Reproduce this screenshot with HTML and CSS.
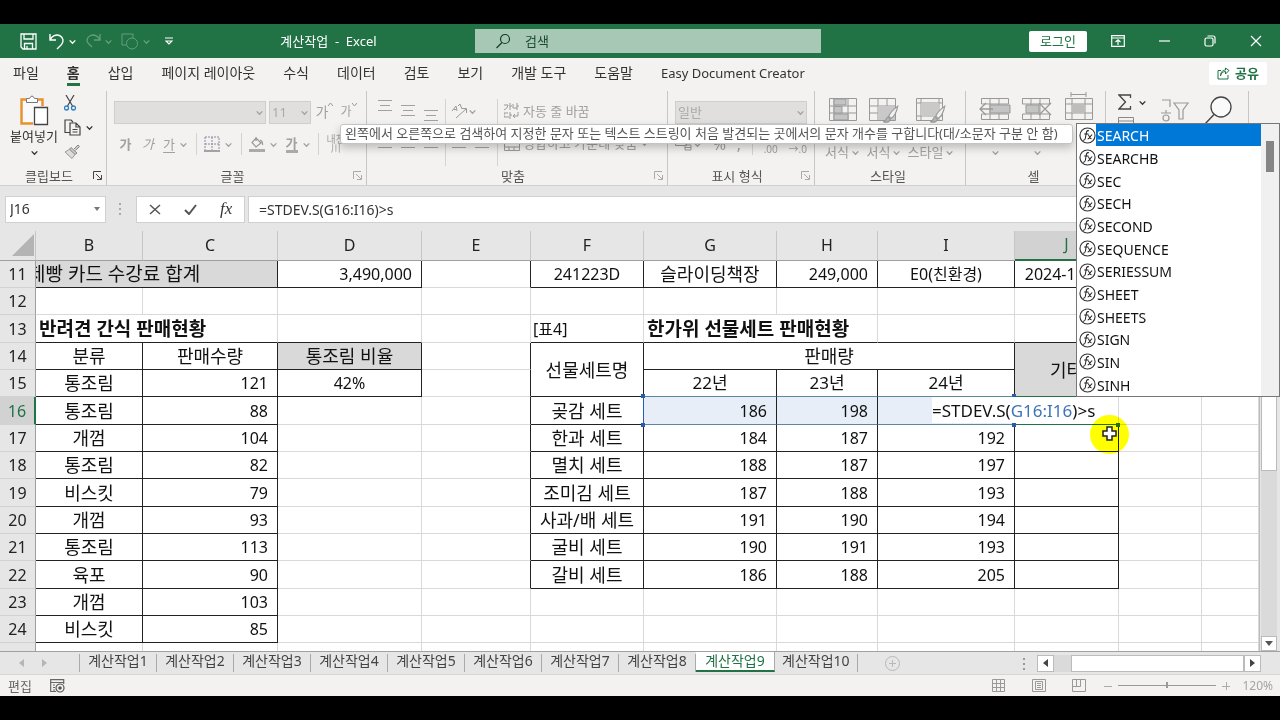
FILE: index.html
```html
<!DOCTYPE html>
<html lang="ko">
<head>
    <meta charset="UTF-8">
    <meta name="viewport" content="width=device-width, initial-scale=1.0">
    <title>계산작업 - Excel</title>
    <link rel="stylesheet" href="styles.css">
</head>
<body>
    <!-- 공용 아이콘 -->
    <svg class="defs" aria-hidden="true">
        <symbol id="chev" viewBox="0 0 8 8"><path d="M1.5 3 4 5.5 6.500 3" fill="none" stroke="currentColor" stroke-width="1.2"/></symbol>
        <symbol id="launch" viewBox="0 0 9 9"><path d="M.5 8V.5H8M3 3l5 5M8.500 4v4.500H4" fill="none" stroke="currentColor"/></symbol>
        <symbol id="fx" viewBox="0 0 18 18"><circle cx="9" cy="9" r="8" fill="none" stroke="#333" stroke-width="1.2"/><path d="M10.500 4c-2.300-.8-2.700 1-3.200 4.500S6.500 14.500 4 14M5.500 7.500h4.500M9.500 8.500c1.500-.6 1.500 4.500 3.800 4M14 8.200c-1.600 0-2.800 4.500-4.800 4.500" fill="none" stroke="#222" stroke-width="1.1"/></symbol>
        <symbol id="brush" viewBox="0 0 14 16"><path d="M13 1C9 4 6 7.500 5 10l2 2c2.500-1.500 5-6 6-11z" fill="#f3f2f1" stroke="#999"/><path d="M4.500 10.500C2.500 11 3 14 .5 15c3 .8 5.500 0 6-2.500z" fill="#b5b5b5" stroke="#999"/></symbol>
        <symbol id="wide" viewBox="0 0 16 14"><path d="M1 1.500h14M3 6.500h10M1 11.500h14" stroke="currentColor" fill="none"/></symbol>
    </svg>

    <div class="window">
        <header class="titlebar">
            <div class="quick">
                <button aria-label="저장"><svg width="17" height="17" viewBox="0 0 17 17"><path d="M1 1h15v15H3l-2-2zM4 1v5h9V1M4.500 16v-5.500h8V16M7 13v3" fill="none" stroke="#fff" stroke-width="1.3"/></svg></button>
                <button class="undo" aria-label="실행 취소"><svg width="16" height="17" viewBox="0 0 16 17"><path d="M1 1v6h6M1 7c2-4 6-6 9.500-4.500 4 2 4.500 6 2 9L8 16" fill="none" stroke="#fff" stroke-width="1.4"/></svg><svg class="chev"><use href="#chev"/></svg></button>
                <button class="faded" aria-label="다시 실행"><svg width="16" height="17" viewBox="0 0 16 17"><path d="M15 1v6H9M15 7c-2-4-6-6-9.500-4.500-4 2-4.500 6-2 8L7 14" fill="none" stroke="#fff" stroke-width="1.3"/></svg><svg class="chev"><use href="#chev"/></svg></button>
                <button class="faded" aria-label="도형"><svg width="18" height="17" viewBox="0 0 18 17"><path d="M5 12H1V1h11v4" fill="none" stroke="#fff"/><circle cx="11" cy="10.500" r="5.500" fill="none" stroke="#fff"/></svg><svg class="chev"><use href="#chev"/></svg></button>
                <button class="more" aria-label="빠른 실행 도구 모음"><svg width="8" height="8" viewBox="0 0 8 8"><path d="M0 1h8M1 4l3 3 3-3z" fill="none" stroke="#fff" stroke-width="1.2"/></svg></button>
            </div>
            <div class="doc-name">계산작업&nbsp; -&nbsp; Excel</div>
            <label class="search">
                <svg width="16" height="16" viewBox="0 0 16 16"><circle cx="10" cy="6" r="4.500" fill="none" stroke="#123f26" stroke-width="1.2"/><path d="M7 9.500 1.500 15" stroke="#123f26" stroke-width="1.3"/></svg>
                <input type="text" placeholder="검색" aria-label="검색">
            </label>
            <button class="login">로그인</button>
            <div class="controls">
                <button aria-label="리본 표시 옵션"><svg width="14" height="12" viewBox="0 0 14 12"><path d="M.7.7h12.600v10.600H.7zM.7 3h12.600M7 10V5M4.500 7 7 4.700 9.500 7" fill="none" stroke="#fff" stroke-width="1.2"/></svg></button>
                <button aria-label="최소화"><svg width="11" height="12"><path d="M0 6h11" stroke="#fff" stroke-width="1.2"/></svg></button>
                <button aria-label="이전 크기로"><svg width="12" height="12" viewBox="0 0 12 12"><rect x="1" y="3" width="8" height="8" rx="1.500" fill="none" stroke="#fff" stroke-width="1.2"/><path d="M3.500 1H9q2 0 2 2v5.500" fill="none" stroke="#fff" stroke-width="1.2"/></svg></button>
                <button aria-label="닫기"><svg width="12" height="12"><path d="m1 1 10 10M11 1 1 11" stroke="#fff" stroke-width="1.2"/></svg></button>
            </div>
        </header>

        <nav class="menu">
            <a href="#">파일</a>
            <a href="#" class="on">홈</a>
            <a href="#">삽입</a>
            <a href="#">페이지 레이아웃</a>
            <a href="#">수식</a>
            <a href="#">데이터</a>
            <a href="#">검토</a>
            <a href="#">보기</a>
            <a href="#">개발 도구</a>
            <a href="#">도움말</a>
            <a href="#" class="latin">Easy Document Creator</a>
            <button class="share"><svg width="13" height="13" viewBox="0 0 13 13"><path d="M4 3.500H1V12h10V8M3.500 9C4 6 6 4.500 8.500 4.500V7L12 3.500 8.500 1v2C5 3 3.500 6 3.500 9z" fill="none" stroke="#217346"/></svg>공유</button>
        </nav>

        <!-- 리본 -->
        <section class="ribbon">
            <div class="group g-clip">
                <div class="body">
                    <button class="paste">
                        <svg width="30" height="31" viewBox="0 0 30 31"><path d="M7 4.500H2.500v24H14M19 4.500h4.500V11" fill="none" stroke="#e8912d" stroke-width="2.400"/><path d="M4 6h18v5h-7v16H4z" fill="#fafafa"/><path d="M7.500 7.500v-4h3q2.500-5 5 0h3v4z" fill="#fff" stroke="#777"/><path d="M15.500 12.500h13v17h-13z" fill="#fff" stroke="#444" stroke-width="1.3"/></svg>
                        붙여넣기
                        <svg class="chev"><use href="#chev"/></svg>
                    </button>
                    <div class="stack">
                        <button aria-label="잘라내기"><svg width="12" height="16" viewBox="0 0 12 16"><path d="m2 0 6.500 11M10 0 3.500 11" stroke="#444" stroke-width="1.2"/><circle cx="2.500" cy="13" r="2" fill="none" stroke="#2b7cc1" stroke-width="1.3"/><circle cx="9.500" cy="13" r="2" fill="none" stroke="#2b7cc1" stroke-width="1.3"/></svg></button>
                        <button aria-label="복사"><svg width="17" height="17" viewBox="0 0 17 17"><path d="M6 13.500H1V1h6l2 2M6 4h6l4 4v8H6zM12 4v4h4M8.500 10.500h5M8.500 13h5" fill="none" stroke="#444" stroke-width="1.2"/></svg><svg class="chev"><use href="#chev"/></svg></button>
                        <button aria-label="서식 복사"><svg width="16" height="15" viewBox="0 0 16 15"><path d="m10 5 4-4 1.500 1.500-4 4M7 3.500l6 5.500-2 1.500L5.500 5.200z" fill="#ccc" stroke="#888"/><path d="M5.500 5.500 1 8l7 6.500 3-4z" fill="#ddd" stroke="#999"/></svg></button>
                    </div>
                </div>
                <div class="caption"><span>클립보드</span><svg class="launch dark"><use href="#launch"/></svg></div>
            </div>

            <div class="group g-font off">
                <div class="body rows">
                    <div class="row">
                        <span class="pick font-pick"><select aria-label="글꼴"><option></option></select><svg class="chev"><use href="#chev"/></svg></span>
                        <span class="pick size-pick"><select aria-label="글꼴 크기"><option>11</option></select><svg class="chev"><use href="#chev"/></svg></span>
                        <button class="grow">가<svg width="5" height="12"><path d="m0 4 2.500-3L5 4" fill="none" stroke="#999"/></svg></button>
                        <button class="grow small">가<svg width="5" height="12"><path d="m0 1 2.500 3L5 1" fill="none" stroke="#999"/></svg></button>
                    </div>
                    <div class="row tight">
                        <button><b>가</b></button>
                        <button><i>가</i></button>
                        <button><u>가</u><svg class="chev"><use href="#chev"/></svg></button>
                        <span class="sep"></span>
                        <button aria-label="테두리"><svg width="16" height="16" viewBox="0 0 16 16"><path d="M1 1h14v13M1 1v13M8 1v13M1 8h14" fill="none" stroke="#8a8aa0" stroke-dasharray="2 1"/><path d="M0 15h16" stroke="#888" stroke-width="1.500"/></svg><svg class="chev"><use href="#chev"/></svg></button>
                        <span class="sep"></span>
                        <button aria-label="채우기 색"><svg width="16" height="17" viewBox="0 0 16 17"><path d="m7 2 5 5-5 4-4-4.500zM7 5V1M11 4q3 1 2.500 5" fill="none" stroke="#999" stroke-width="1.2"/><path d="M0 14.500h16" stroke="#aaa" stroke-width="3"/></svg><svg class="chev"><use href="#chev"/></svg></button>
                        <button><b class="tint">가</b><svg class="chev"><use href="#chev"/></svg></button>
                        <span class="sep"></span>
                        <button class="ruby">내천<br>川</button>
                    </div>
                </div>
                <div class="caption"><span>글꼴</span><svg class="launch"><use href="#launch"/></svg></div>
            </div>

            <div class="group g-align off">
                <div class="body cols">
                    <div class="trio">
                        <svg class="up"><use href="#wide"/></svg><svg><use href="#wide"/></svg><svg class="down"><use href="#wide"/></svg>
                        <svg><use href="#wide"/></svg><svg><use href="#wide"/></svg><svg><use href="#wide"/></svg>
                    </div>
                    <div class="turn">
                        <button aria-label="방향"><svg width="17" height="16" viewBox="0 0 17 16"><path d="m1 8 4-5 1 5M3 6.500h2M7 3l2-2 2 5M5 15 15 6M11 5.500h4.500V10" fill="none" stroke="#999"/></svg><svg class="chev"><use href="#chev"/></svg></button>
                        <div><svg><use href="#wide"/></svg><svg><use href="#wide"/></svg></div>
                    </div>
                    <div class="wrap">
                        <button><svg width="16" height="16" viewBox="0 0 16 16"><path d="M0 2h4q0 3-4 5M6 0v7M6 3h2M9 1v4h4M13 0v7M13 3h2M4 10H0v4h5M6 9v7M6 12h2M14 9v4H9M11 11l-2 2 2 2" fill="none" stroke="#999"/></svg>자동 줄 바꿈</button>
                        <button><svg width="16" height="15" viewBox="0 0 16 15"><path d="M.5.5h15v14H.5zM.5 4h15M.5 11h15M5 .5V4M10 .5V4M5 11v3.500M10 11v3.500" fill="none" stroke="#999"/></svg>병합하고 가운데 맞춤<svg class="chev"><use href="#chev"/></svg></button>
                    </div>
                </div>
                <div class="caption"><span>맞춤</span><svg class="launch"><use href="#launch"/></svg></div>
            </div>

            <div class="group g-num off">
                <div class="body rows">
                    <div class="row"><span class="pick"><select aria-label="표시 형식"><option>일반</option></select><svg class="chev"><use href="#chev"/></svg></span></div>
                    <div class="row spread">
                        <button aria-label="회계 표시 형식"><svg width="18" height="14" viewBox="0 0 18 14"><path d="M.5 2.500h11v6H.5zM10 8h6v5h-6zM10 10.500h6" fill="none" stroke="#999"/></svg><svg class="chev"><use href="#chev"/></svg></button>
                        <button class="pct">%</button>
                        <button class="pct">,</button>
                        <span class="sep"></span>
                        <button class="dec">.0<br>.00</button>
                        <button class="dec">.00<br>→.0</button>
                    </div>
                </div>
                <div class="caption"><span>표시 형식</span><svg class="launch"><use href="#launch"/></svg></div>
            </div>

            <div class="group g-style off">
                <div class="body tiles">
                    <button aria-label="조건부 서식"><svg width="30" height="26" viewBox="0 0 30 26"><path d="M1.500 1.500h27v22h-27zM1.500 9h27M1.500 16h27M6 1.500v22M20 1.500v22" fill="none" stroke="#999"/><path d="M6 2h12v6H6zM6 9.500h8V16H6zM6 17h14v6H6z" fill="#c4c4c4" stroke="#999"/></svg><span>서식<svg class="chev"><use href="#chev"/></svg></span></button>
                    <button aria-label="표 서식"><svg width="32" height="26" viewBox="0 0 32 26"><path d="M1.500 1.500h26v22h-26zM1.500 9h26M1.500 16h26M10 1.500v22M19 1.500v22" fill="none" stroke="#999"/><path d="M10 9h17v14H10z" fill="#c9c9c9"/><use href="#brush" x="15" y="8" width="16" height="18"/></svg><span>서식<svg class="chev"><use href="#chev"/></svg></span></button>
                    <button aria-label="셀 스타일"><svg width="32" height="26" viewBox="0 0 32 26"><path d="M1.500 1.500h26v22h-26zM1.500 6h26M1.500 19h26M6 1.500v22M24 1.500v22" fill="none" stroke="#999"/><path d="M6 6h18v13H6z" fill="#c9c9c9"/><use href="#brush" x="15" y="8" width="16" height="18"/></svg><span>스타일<svg class="chev"><use href="#chev"/></svg></span></button>
                </div>
                <div class="caption"><span>스타일</span></div>
            </div>

            <div class="group g-cell off">
                <div class="body tiles">
                    <button aria-label="삽입"><svg width="32" height="26" viewBox="0 0 32 26"><path d="M2.500 7V1.500h27V7M2.500 17v5.500h27V17M11 1.500v21M20 1.500v21M2.500 7h27M2.500 17h27" fill="none" stroke="#999"/><path d="M11 8h20v8H11z" fill="#c4c4c4" stroke="#999"/><path d="M14 12H1M7 6l-6 6 6 6" fill="none" stroke="#999" stroke-width="1.3"/></svg><span><svg class="chev"><use href="#chev"/></svg></span></button>
                    <button aria-label="삭제"><svg width="32" height="26" viewBox="0 0 32 26"><path d="M1.500 7V1.500h27V7M1.500 17v5.500h27V17M10 1.500v21M19 1.500v21M1.500 7h27M1.500 17h27" fill="none" stroke="#999"/><path d="M5 8h13v8H5z" fill="#c4c4c4" stroke="#999"/><path d="m18 6 12 12M30 6 18 18" stroke="#999" stroke-width="1.300"/></svg><span><svg class="chev"><use href="#chev"/></svg></span></button>
                    <button aria-label="서식"><svg class="spill" width="30" height="26" viewBox="0 0 30 26"><path d="M7-2.500h15M7-5v5M22-5v5M1.500 1.500h27v21h-27zM1.500 7h27M1.500 16h27M8 1.500v21M21 1.500v21" fill="none" stroke="#999"/><path d="M8 7h13v9H8z" fill="#bdbdbd"/></svg><span></span></button>
                </div>
                <div class="caption"><span>셀</span></div>
            </div>

            <div class="group g-edit">
                <div class="body edit">
                    <div class="sum">
                        <button aria-label="합계"><svg width="14" height="16" viewBox="0 0 14 16"><path d="M12.500 4V1H1l6.500 7L1 15h11.500v-3" fill="none" stroke="#444" stroke-width="1.300"/></svg><svg class="chev"><use href="#chev"/></svg></button>
                        <button aria-label="채우기"><svg width="16" height="16" viewBox="0 0 16 16"><path d="M.5.5h15v14H.5zM.5 4h15M8 6v6M5 9l3 3 3-3" fill="none" stroke="#888"/></svg></button>
                    </div>
                    <button aria-label="정렬 및 필터"><svg width="30" height="26" viewBox="0 0 30 26"><path d="M2 2h8v7M1 15h10M6 12v3M14 5h14l-5 7v9h-4v-9z" fill="none" stroke="#999" stroke-width="1.200"/><circle cx="6" cy="20" r="3" fill="none" stroke="#999" stroke-width="1.200"/></svg></button>
                    <button aria-label="찾기 및 선택"><svg width="30" height="32" viewBox="0 0 30 32"><circle cx="18" cy="12" r="10" fill="#fafafa" stroke="#444" stroke-width="1.300"/><path d="M11 19.500 1 30" stroke="#444" stroke-width="1.400"/></svg></button>
                </div>
                <div class="caption"><span></span></div>
            </div>
        </section>

        <section class="formula-bar">
            <label class="name-box"><input type="text" value="J16" aria-label="이름 상자"><svg width="6" height="4"><path d="M0 0h6L3 4z" fill="#777"/></svg></label>
            <svg class="dots" width="3" height="12"><path d="M0 0h2v2H0zM0 5h2v2H0zM0 10h2v2H0z" fill="#aaa"/></svg>
            <div class="fx-buttons">
                <button aria-label="취소"><svg width="12" height="11"><path d="m1 1 10 9M11 1 1 10" stroke="#555" stroke-width="1.500"/></svg></button>
                <button aria-label="입력"><svg width="13" height="11"><path d="m1 6 4 4 7-9" fill="none" stroke="#555" stroke-width="2"/></svg></button>
                <button class="fx" aria-label="함수 삽입">fx</button>
            </div>
            <input class="formula" type="text" value="=STDEV.S(G16:I16)&gt;s" aria-label="수식 입력줄">
        </section>

        <main class="sheet">
            <div class="cells">
                <table>
                    <colgroup><col class="c-no"><col class="c-b"><col class="c-c"><col class="c-d"><col class="c-e"><col class="c-f"><col class="c-g"><col class="c-h"><col class="c-i"><col class="c-j"><col class="c-k"><col></colgroup>
                    <thead>
                        <tr><th class="corner"><svg width="22" height="22"><path d="M22 0v22H0z" fill="#b4b4b4"/></svg></th><th>B</th><th>C</th><th>D</th><th>E</th><th>F</th><th>G</th><th>H</th><th>I</th><th class="sel">J</th><th>K</th><th>L</th></tr>
                    </thead>
                    <tbody>
                        <tr><th>11</th><td class="box grey cut" colspan="2"><span>제빵 카드 수강료 합계</span></td><td class="box num">3,490,000</td><td class="r"></td><td class="box lat">241223D</td><td class="box">슬라이딩책장</td><td class="box num">249,000</td><td class="box lat">E0(친환경)</td><td class="box lat">2024-12-20</td><td></td><td></td></tr>
                        <tr><th>12</th><td></td><td></td><td></td><td></td><td></td><td></td><td></td><td></td><td></td><td></td><td></td></tr>
                        <tr><th>13</th><td class="u title" colspan="2">반려견 간식 판매현황</td><td class="u"></td><td></td><td class="u note">[표4]</td><td class="u title" colspan="2">한가위 선물세트 판매현황</td><td class="u"></td><td class="u"></td><td></td><td></td></tr>
                        <tr><th>14</th><td class="box">분류</td><td class="box">판매수량</td><td class="box grey">통조림 비율</td><td class="r"></td><td class="box" rowspan="2">선물세트명</td><td class="box" colspan="3">판매량</td><td class="box grey edge" rowspan="2">기타</td><td></td><td></td></tr>
                        <tr><th>15</th><td class="box">통조림</td><td class="box num">121</td><td class="box lat">42%</td><td class="r"></td><td class="box ref-top mix">22년</td><td class="box ref-top mix">23년</td><td class="box ref-top mix">24년</td><td></td><td></td></tr>
                        <tr><th class="sel">16</th><td class="box">통조림</td><td class="box num">88</td><td></td><td class="r"></td><td class="box ref-left">곶감 세트</td><td class="box num ref">186</td><td class="box num ref">198</td><td class="box num ref"></td><td class="edge host"><i class="knob k1"></i><i class="knob k2"></i><i class="knob k3"></i><i class="knob k4"></i><i class="knob k5"></i><div class="editor">=STDEV.S(<span>G16:I16</span>)&gt;s</div></td><td></td><td></td></tr>
                        <tr><th>17</th><td class="box">개껌</td><td class="box num">104</td><td></td><td class="r"></td><td class="box">한과 세트</td><td class="box num">184</td><td class="box num">187</td><td class="box num">192</td><td class="box"></td><td></td><td></td></tr>
                        <tr><th>18</th><td class="box">통조림</td><td class="box num">82</td><td></td><td class="r"></td><td class="box">멸치 세트</td><td class="box num">188</td><td class="box num">187</td><td class="box num">197</td><td class="box"></td><td></td><td></td></tr>
                        <tr><th>19</th><td class="box">비스킷</td><td class="box num">79</td><td></td><td class="r"></td><td class="box">조미김 세트</td><td class="box num">187</td><td class="box num">188</td><td class="box num">193</td><td class="box"></td><td></td><td></td></tr>
                        <tr><th>20</th><td class="box">개껌</td><td class="box num">93</td><td></td><td class="r"></td><td class="box">사과/배 세트</td><td class="box num">191</td><td class="box num">190</td><td class="box num">194</td><td class="box"></td><td></td><td></td></tr>
                        <tr><th>21</th><td class="box">통조림</td><td class="box num">113</td><td></td><td class="r"></td><td class="box">굴비 세트</td><td class="box num">190</td><td class="box num">191</td><td class="box num">193</td><td class="box"></td><td></td><td></td></tr>
                        <tr><th>22</th><td class="box">육포</td><td class="box num">90</td><td></td><td class="r"></td><td class="box">갈비 세트</td><td class="box num">186</td><td class="box num">188</td><td class="box num">205</td><td class="box"></td><td></td><td></td></tr>
                        <tr><th>23</th><td class="box">개껌</td><td class="box num">103</td><td></td><td></td><td></td><td></td><td></td><td></td><td></td><td></td><td></td></tr>
                        <tr><th>24</th><td class="box">비스킷</td><td class="box num">85</td><td></td><td></td><td></td><td></td><td></td><td></td><td></td><td></td><td></td></tr>
                        <tr><th></th><td></td><td></td><td></td><td></td><td></td><td></td><td></td><td></td><td></td><td></td><td></td></tr>
                    </tbody>
                </table>
            </div>
            <div class="v-scroll">
                <div class="thumb"></div>
                <div class="track"></div>
                <button aria-label="아래로"><svg width="8" height="5"><path d="M0 0h8L4 5z" fill="#555"/></svg></button>
            </div>
        </main>

        <nav class="sheets">
            <div class="arrows">
                <svg width="5" height="8"><path d="M5 0v8L0 4z" fill="#b5b5b5"/></svg>
                <svg width="5" height="8"><path d="M0 0v8l5-4z" fill="#b5b5b5"/></svg>
            </div>
            <a href="#">계산작업1</a><a href="#">계산작업2</a><a href="#">계산작업3</a><a href="#">계산작업4</a><a href="#">계산작업5</a><a href="#">계산작업6</a><a href="#">계산작업7</a><a href="#">계산작업8</a><a href="#" class="on">계산작업9</a><a href="#">계산작업10</a>
            <button class="add" aria-label="새 시트"><svg width="15" height="15"><circle cx="7.500" cy="7.500" r="7" fill="none" stroke="#b8b8b8"/><path d="M4 7.500h7M7.500 4v7" stroke="#b8b8b8"/></svg></button>
            <div class="h-scroll">
                <svg class="dots" width="3" height="12"><path d="M0 0h2v2H0zM0 5h2v2H0zM0 10h2v2H0z" fill="#999"/></svg>
                <button aria-label="왼쪽으로"><svg width="5" height="8"><path d="M5 0v8L0 4z" fill="#444"/></svg></button>
                <div class="track"></div>
                <div class="thumb"></div>
                <button aria-label="오른쪽으로"><svg width="5" height="8"><path d="M0 0v8l5-4z" fill="#444"/></svg></button>
            </div>
        </nav>

        <footer class="status">
            <span>편집</span>
            <svg width="15" height="14" viewBox="0 0 15 14"><path d="M6 12.500H.7V.7h13V5M.7 3.500h13M3 6h2M3 8.500h2M3 11h2" fill="none" stroke="#666" stroke-width="1.200"/><circle cx="10" cy="9" r="4" fill="none" stroke="#555" stroke-width="1.200"/><circle cx="10" cy="9" r="1.800" fill="#555"/></svg>
            <div class="views">
                <button aria-label="기본"><svg width="14" height="14"><path d="M.5.5h12v12H.5zM.5 4.500h12M.5 8.500h12M4.500.5v12M8.500.5v12" fill="none" stroke="#999"/></svg></button>
                <button aria-label="페이지 레이아웃"><svg width="14" height="14"><path d="M.5.5h13v12H.5zM3.500 2.500h7v8h-7zM5 4.500h4M5 6.500h4M5 8.500h4" fill="none" stroke="#999"/></svg></button>
                <button aria-label="페이지 나누기 미리 보기"><svg width="14" height="14"><path d="M.5.5h13v12H.5zM4.500.5v7M.5 7.500h8M8.500.5v7" fill="none" stroke="#999"/></svg></button>
            </div>
            <div class="zoom">
                <button aria-label="축소"><svg width="8" height="8"><path d="M0 4.500h8" stroke="#aaa"/></svg></button>
                <input type="range" min="10" max="190" value="100" aria-label="확대/축소">
                <button aria-label="확대"><svg width="8" height="8"><path d="M0 4.500h8M4.500 0v8" stroke="#aaa"/></svg></button>
                <span>120%</span>
            </div>
        </footer>

        <!-- 함수 설명과 자동 완성 목록 -->
        <div class="tip" role="tooltip">왼쪽에서 오른쪽으로 검색하여 지정한 문자 또는 텍스트 스트링이 처음 발견되는 곳에서의 문자 개수를 구합니다(대/소문자 구분 안 함)</div>
        <div class="suggest">
            <ul>
                <li class="on"><svg><use href="#fx"/></svg><span>SEARCH</span></li>
                <li><svg><use href="#fx"/></svg><span>SEARCHB</span></li>
                <li><svg><use href="#fx"/></svg><span>SEC</span></li>
                <li><svg><use href="#fx"/></svg><span>SECH</span></li>
                <li><svg><use href="#fx"/></svg><span>SECOND</span></li>
                <li><svg><use href="#fx"/></svg><span>SEQUENCE</span></li>
                <li><svg><use href="#fx"/></svg><span>SERIESSUM</span></li>
                <li><svg><use href="#fx"/></svg><span>SHEET</span></li>
                <li><svg><use href="#fx"/></svg><span>SHEETS</span></li>
                <li><svg><use href="#fx"/></svg><span>SIGN</span></li>
                <li><svg><use href="#fx"/></svg><span>SIN</span></li>
                <li><svg><use href="#fx"/></svg><span>SINH</span></li>
            </ul>
            <div class="bar"><div></div></div>
        </div>

        <div class="spot"></div>
        <svg class="cursor" width="17" height="17" viewBox="0 0 17 17"><path d="M6 2h5v4h4v5h-4v4H6v-4H2V6h4z" fill="#fff" stroke="#222" stroke-width="1.500"/></svg>
    </div>
</body>
</html>
```

FILE: styles.css
```css
* {
    box-sizing: border-box;
    margin: 0;
    padding: 0;
}

body {
    height: 100vh;
    padding: 24px 0;
    background: #000;
    color: #333;
    font-family: "Noto Sans", "Noto Sans CJK KR", sans-serif;
    font-size: 14px;
    line-height: 20px;
    overflow: hidden;
}

button {
    display: flex;
    align-items: center;
    justify-content: center;
    border: 0;
    background: none;
    color: inherit;
    font: inherit;
}

input,
select {
    border: 0;
    outline: 0;
    background: none;
    color: inherit;
    font: inherit;
    min-width: 0;
}

a {
    color: inherit;
    text-decoration: none;
}

svg {
    display: block;
    flex: none;
}

.defs {
    position: absolute;
    width: 0;
    height: 0;
}

.chev {
    width: 9px;
    height: 9px;
}

.window {
    position: relative;
    display: flex;
    flex-direction: column;
    height: 100%;
    background: #e6e6e6;
    overflow: hidden;
    white-space: nowrap;
}

/* 제목 표시줄 */
.titlebar {
    display: flex;
    align-items: center;
    flex: 0 0 34px;
    background: #217346;
    color: #fff;
    font-size: 13px;
}

.quick {
    display: flex;
    align-items: center;
    gap: 8px;
    flex: 0 0 182px;
    padding-left: 20px;
}

.quick button {
    gap: 3px;
}

.quick .undo {
    padding-left: 4px;
}

.quick .more {
    padding-left: 6px;
}

.quick .faded {
    opacity: 0.3;
}

.doc-name {
    flex: 0 0 293px;
    text-align: center;
}

.search {
    display: flex;
    align-items: center;
    gap: 14px;
    flex: 0 1 346px;
    height: 24px;
    padding-left: 20px;
    background: #a6c8b5;
}

.search input {
    flex: 1;
}

.search input::placeholder {
    color: #1d4a30;
    opacity: 1;
}

.login {
    width: 58px;
    height: 21px;
    margin-left: auto;
    background: #fff;
    border-radius: 2px;
    color: #217346;
}

.controls {
    display: flex;
    padding: 0 1px 0 8px;
}

.controls button {
    width: 46px;
    height: 34px;
}

/* 메뉴 */
.menu {
    display: flex;
    align-items: center;
    gap: 28px;
    flex: 0 0 30px;
    padding: 0 13px;
    background: #f3f2f1;
}

.menu .on {
    font-weight: 700;
    border-bottom: 3px solid #217346;
    margin-top: 2px;
}

.menu .latin {
    font-size: 13px;
}

.share {
    gap: 5px;
    width: 58px;
    height: 23px;
    margin-left: auto;
    background: #fff;
    border-radius: 2px;
    color: #217346;
    font-size: 13px;
    font-weight: 700;
}

/* 리본 */
.ribbon {
    display: flex;
    flex: 0 0 98px;
    background: #f3f2f1;
    border-bottom: 1px solid #d0d0d0;
    font-size: 13px;
}

.group {
    display: flex;
    flex-direction: column;
    margin-top: 3px;
    border-right: 1px solid #c8c6c4;
}

.g-clip { width: 107px; }
.g-font { width: 260px; }
.g-align { width: 301px; }
.g-num { width: 147px; }
.g-style { width: 151px; }
.g-cell { width: 140px; }
.g-edit { width: 143px; }

.off .body {
    color: #a3a19f;
}

.body {
    display: flex;
    flex: 1;
}

.caption {
    display: flex;
    align-items: center;
    height: 19px;
    padding-right: 4px;
    color: #555;
}

.caption span {
    flex: 1;
    text-align: center;
}

.launch {
    width: 9px;
    height: 9px;
    margin-left: -5px;
    color: #aaa;
}

.launch.dark {
    color: #444;
}

.paste {
    flex-direction: column;
    justify-content: flex-start;
    width: 60px;
    padding: 4px 0 0 8px;
}

.paste .chev {
    margin-top: 2px;
}

.stack {
    display: grid;
    grid-template-rows: repeat(3, 24px);
    padding-left: 4px;
}

.stack button {
    justify-content: flex-start;
    gap: 4px;
}

.rows {
    flex-direction: column;
    gap: 8px;
    padding: 9px 7px 0;
}

.row {
    display: flex;
    align-items: center;
    gap: 3px;
    height: 24px;
}

.row.tight {
    justify-content: space-between;
    padding: 0 14px 0 4px;
}

.row.tight button {
    gap: 4px;
    min-width: 15px;
}

.row.spread {
    justify-content: space-between;
}

.row u {
    text-underline-offset: 3px;
}

.tint {
    border-bottom: 3px solid #aaa;
    line-height: 14px;
}

.sep {
    width: 1px;
    height: 22px;
    background: #d5d3d1;
}

.pick {
    display: grid;
    flex: 1;
    align-items: center;
    height: 23px;
    background: #e1dfdd;
    border: 1px solid #d0cecc;
}

.pick select,
.pick .chev {
    grid-area: 1 / 1;
}

.pick select {
    appearance: none;
    padding-left: 2px;
    color: #aaa;
    opacity: 1;
}

.pick .chev {
    justify-self: end;
    margin-right: 1px;
    pointer-events: none;
}

.size-pick {
    flex: 0 0 42px;
}

.row .grow {
    align-items: flex-start;
    width: 21px;
    font-size: 14px;
}

.row .small {
    font-size: 12px;
}

.row .ruby {
    display: block;
    font-size: 10px;
    line-height: 9px;
}

.cols {
    padding: 8px 0 0 10px;
}

.cols svg:not([width], .chev) {
    width: 16px;
    height: 14px;
}

.trio {
    display: grid;
    grid-template-columns: repeat(3, 16px);
    grid-template-rows: 24px 32px;
    gap: 4px 7px;
    align-items: center;
    padding-right: 6px;
    border-right: 1px solid #d5d3d1;
}

.trio .up {
    align-self: start;
}

.trio .down {
    align-self: end;
}

.turn {
    display: grid;
    grid-template-rows: 24px 32px;
    gap: 4px;
    align-items: center;
    width: 52px;
    padding-left: 5px;
    border-right: 1px solid #d5d3d1;
}

.turn button {
    justify-content: flex-start;
}

.turn div {
    display: flex;
    gap: 7px;
}

.wrap {
    display: grid;
    grid-template-rows: 24px 32px;
    gap: 4px;
    padding-left: 6px;
}

.wrap button {
    justify-content: flex-start;
    gap: 3px;
}

.pct {
    font-size: 16px;
}

.row .dec {
    display: block;
    font-size: 10px;
    line-height: 10px;
}

.tiles {
    display: grid;
    grid-template-columns: repeat(3, 42px);
    padding: 6px 8px 0;
}

.g-style .tiles {
    grid-template-columns: 39px 44px 50px;
}

.tiles button {
    flex-direction: column;
    justify-content: space-between;
    height: 65px;
}

.tiles span {
    display: flex;
    align-items: center;
    gap: 2px;
    min-height: 20px;
}

.spill {
    overflow: visible;
}

.edit {
    align-items: flex-start;
    gap: 13px;
    padding: 3px 12px 0;
}

.sum {
    display: grid;
    gap: 7px;
}

.sum button {
    justify-content: flex-start;
    gap: 6px;
}

.edit > button {
    height: 33px;
}

/* 수식 입력줄 */
.formula-bar {
    display: flex;
    align-items: center;
    flex: 0 0 45px;
    padding: 1px 0 0 5px;
}

.name-box,
.fx-buttons,
.formula {
    height: 27px;
    background: #fff;
    border: 1px solid #d0d0d0;
}

.name-box {
    display: flex;
    align-items: center;
    width: 101px;
    padding: 0 5px 0 4px;
}

.name-box input {
    flex: 1;
}

.formula-bar .dots {
    margin: 0 14px 0 13px;
}

.fx-buttons {
    display: flex;
    width: 109px;
    margin-right: 3px;
}

.fx-buttons button {
    flex: 1;
}

.fx {
    font-family: "Liberation Serif", serif;
    font-size: 17px;
    font-style: italic;
}

.formula-bar .formula {
    flex: 1;
    padding-left: 10px;
    background: #fff;
    border: 1px solid #d0d0d0;
}

/* 워크시트 */
.sheet {
    display: flex;
    flex: 1;
    min-height: 0;
    border-bottom: 1px solid #9fa3a0;
}

.cells {
    flex: 1;
    overflow: hidden;
    border-right: 1px solid #bbb;
}

table {
    width: 100%;
    table-layout: fixed;
    border-collapse: separate;
    border-spacing: 0;
    background: #fff;
    color: #111;
    font-size: 18px;
}

.c-no { width: 36px; }
.c-b { width: 107px; }
.c-c { width: 135px; }
.c-d { width: 144px; }
.c-e { width: 109px; }
.c-f { width: 113px; }
.c-g { width: 133px; }
.c-h { width: 101px; }
.c-i { width: 137px; }
.c-j { width: 104px; }
.c-k { width: 83px; }

th {
    background: #e6e6e6;
    border-right: 1px solid #c6c6c6;
    border-bottom: 1px solid #9f9f9f;
    color: #222;
    font-size: 16px;
    font-weight: 400;
}

thead th {
    height: 30px;
    padding-bottom: 2px;
}

tbody th {
    border-right-color: #9f9f9f;
    border-bottom-color: #d2d2d2;
}

th.sel {
    background: #d2d2d2;
    color: #217346;
}

thead .sel {
    border-bottom: 2px solid #217346;
}

tbody .sel {
    border-right: 2px solid #217346;
}

.corner svg {
    margin-left: 12px;
}

tbody tr {
    height: 27px;
}

tbody tr:nth-child(3n) {
    height: 28px;
}

td {
    border-right: 1px solid #d9d9d9;
    border-bottom: 1px solid #d9d9d9;
    text-align: center;
}

td.r {
    border-right-color: #222;
}

td.u {
    border-bottom-color: #222;
}

td.box {
    border-color: #222;
}

td.grey {
    background: #d9d9d9;
}

td.num {
    padding-right: 9px;
    text-align: right;
    font-size: 16px;
}

td.lat {
    font-size: 16px;
}

td.mix {
    font-size: 17px;
}

td.cut {
    overflow: hidden;
    text-align: left;
    font-size: 19px;
}

.cut span {
    margin-left: -8px;
}

td.title {
    padding-left: 3px;
    text-align: left;
    font-size: 19px;
    font-weight: 700;
}

td.note {
    padding-left: 2px;
    text-align: left;
    font-size: 16px;
}

td.ref {
    background: #e7eef7;
}

td.ref,
td.ref-top {
    border-bottom-color: #5b87a0;
}

td.ref-left {
    border-right-color: #2a5caa;
}

td.edge {
    border-bottom-color: #217346;
}

.host {
    position: relative;
}

/* 셀 편집 상자 */
.editor {
    position: absolute;
    left: -83px;
    top: 0;
    width: 165px;
    height: 26px;
    background: #fff;
    font-size: 17px;
    line-height: 27px;
    text-align: left;
}

.editor span {
    color: #3f74b8;
}

.knob {
    position: absolute;
    width: 4px;
    height: 4px;
    background: #2a5caa;
}

.k1 { left: -374px; top: -3px; }
.k2 { left: -374px; bottom: -3px; }
.k3 { left: -3px; top: -3px; }
.k4 { left: -3px; bottom: -3px; }
.k5 { right: -2px; bottom: -3px; background: #217346; }

.v-scroll {
    display: flex;
    flex-direction: column;
    flex: 0 0 20px;
    padding: 0 3px 0 1px;
}

.v-scroll .thumb {
    flex: 0 0 240px;
    background: #fff;
    border: 1px solid #bbb;
}

.v-scroll .track {
    flex: 1;
    background: #dadada;
}

.v-scroll button {
    height: 15px;
    background: #fff;
    border: 1px solid #bbb;
}

/* 시트 탭 */
.sheets {
    display: flex;
    align-items: center;
    flex: 0 0 23px;
    border-bottom: 1px solid #d5d5d5;
}

.arrows {
    display: flex;
    gap: 18px;
    width: 79px;
    padding-left: 19px;
}

.sheets a {
    min-width: 77px;
    height: 18px;
    line-height: 14px;
    padding: 0 7px;
    border-right: 1px solid #aaa;
    text-align: center;
    color: #444;
}

.sheets a:first-of-type {
    min-width: 78px;
    border-left: 1px solid #aaa;
}

.sheets .on {
    min-width: 79px;
    height: 20px;
    align-self: flex-start;
    line-height: 18px;
    background: #fff;
    border-bottom: 2px solid #217346;
    color: #217346;
}

.add {
    margin-left: 27px;
}

.h-scroll {
    display: flex;
    flex: 0 0 238px;
    height: 17px;
    margin: 0 19px 0 auto;
    align-items: stretch;
}

.h-scroll .dots {
    margin: 3px 11px 0 0;
}

.h-scroll button {
    width: 17px;
    background: #fff;
    border: 1px solid #bbb;
}

.h-scroll .track {
    width: 17px;
    background: #dadada;
}

.h-scroll .thumb {
    flex: 1;
    background: #fff;
    border: 1px solid #bbb;
}

/* 상태 표시줄 */
.status {
    display: flex;
    align-items: center;
    gap: 18px;
    flex: 0 0 21px;
    padding: 0 7px 0 8px;
    background: #f3f2f1;
    color: #666;
    font-size: 13px;
}

.views {
    display: flex;
    gap: 26px;
    margin-left: auto;
}

.zoom {
    display: flex;
    align-items: center;
    gap: 6px;
    color: #a5a5a5;
}

.zoom input {
    width: 98px;
    height: 8px;
    appearance: none;
}

.zoom input::-webkit-slider-runnable-track {
    height: 1px;
    background: #999;
}

.zoom input::-webkit-slider-thumb {
    appearance: none;
    width: 2px;
    height: 6px;
    margin-top: -3px;
    background: #999;
}

.zoom span {
    padding-left: 6px;
    font-size: 12px;
}

/* 함수 설명 */
.tip {
    position: absolute;
    left: 340px;
    top: 100px;
    width: 733px;
    height: 20px;
    padding-left: 4px;
    background: #fff;
    border: 1px solid #c4c4c4;
    border-radius: 3px;
    box-shadow: 0 4px 9px rgba(0, 0, 0, 0.22);
    color: #555;
    font-size: 13px;
    line-height: 17px;
}

.suggest {
    position: absolute;
    right: 0;
    top: 99px;
    display: flex;
    width: 204px;
    height: 274px;
    background: #fff;
    border: 1px solid #777;
    color: #111;
}

.suggest ul {
    display: grid;
    grid-template-rows: repeat(12, 1fr);
    flex: 1;
    list-style: none;
}

.suggest li {
    display: flex;
    align-items: center;
    padding-left: 2px;
    font-size: 14px;
}

.suggest li svg {
    width: 17px;
    height: 17px;
}

.suggest li span {
    flex: 1;
    padding: 2px 1px 0;
}

.suggest .on span {
    background: #0078d7;
    color: #fff;
}

.suggest .bar {
    width: 18px;
    padding: 17px 5px;
    background: #f0f0f0;
}

.suggest .bar div {
    height: 31px;
    background: #858585;
}

/* 마우스 포인터 */
.spot {
    position: absolute;
    left: 1090px;
    top: 391px;
    width: 39px;
    height: 39px;
    border-radius: 50%;
    background: #ff0;
    mix-blend-mode: multiply;
}

.cursor {
    position: absolute;
    left: 1101px;
    top: 401px;
}
```
